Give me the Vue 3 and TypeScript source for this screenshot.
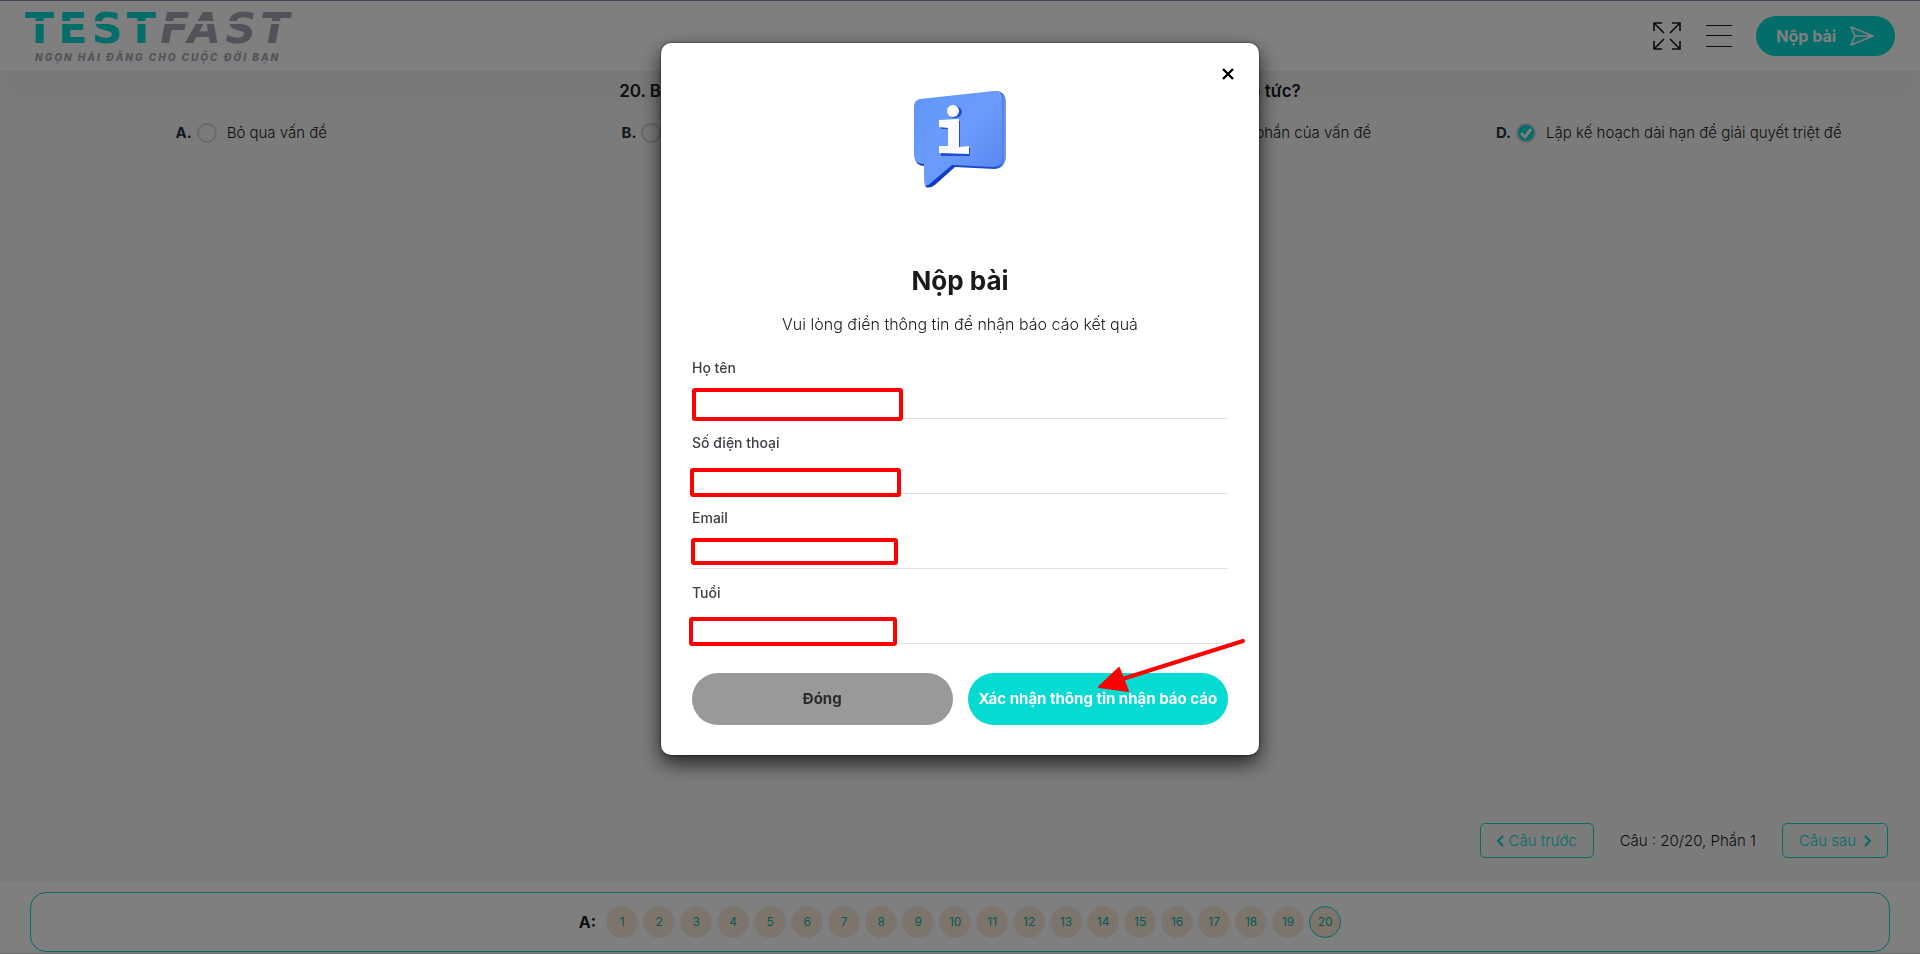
<script setup lang="ts">
import { ref } from 'vue'

interface Option {
  key: string
  text: string
}

interface Field {
  id: string
  label: string
  type: string
  mark: { left: number; top: number; width: number; height: number }
}

const options: Option[] = [
  { key: 'A', text: 'Bỏ qua vấn đề' },
  { key: 'B', text: 'Nhờ người khác hỗ trợ' },
  { key: 'C', text: 'Giải quyết tạm thời những phần của vấn đề' },
  { key: 'D', text: 'Lập kế hoạch dài hạn để giải quyết triệt để' },
]

const fields: Field[] = [
  { id: 'name', label: 'Họ tên', type: 'text', mark: { left: 0, top: 30, width: 211, height: 33 } },
  { id: 'phone', label: 'Số điện thoại', type: 'tel', mark: { left: -2, top: 35, width: 211, height: 29 } },
  { id: 'email', label: 'Email', type: 'email', mark: { left: -1, top: 30, width: 207, height: 27 } },
  { id: 'age', label: 'Tuổi', type: 'text', mark: { left: -3, top: 34, width: 208, height: 29 } },
]

const selected = ref('D')
const current = ref(20)
const total = 20
const values = ref<Record<string, string>>({ name: '', phone: '', email: '', age: '' })

function markStyle(mark: Field['mark']) {
  return {
    left: `${mark.left}px`,
    top: `${mark.top}px`,
    width: `${mark.width}px`,
    height: `${mark.height}px`,
  }
}
</script>

<template>
  <div class="page">
    <header class="header">
      <a class="logo" href="#">
        <span class="logo-name"><span class="logo-test">TEST</span><span class="logo-fast">FAST</span></span>
        <span class="logo-tagline">NGỌN HẢI ĐĂNG CHO CUỘC ĐỜI BẠN</span>
      </a>
      <div class="header-tools">
        <button class="icon-button" type="button" aria-label="Toàn màn hình">
          <svg width="30" height="30" viewBox="0 0 30 30" fill="none" stroke="#1a1a1a" stroke-width="1.6">
            <path d="M2 10V2h8M2 2l10 10M20 2h8v8M28 2L18 12M2 20v8h8M2 28l10-10M20 28h8v-8M28 28L18 18" />
          </svg>
        </button>
        <button class="icon-button" type="button" aria-label="Danh mục">
          <svg width="26" height="24" viewBox="0 0 26 24" fill="#1a1a1a">
            <path d="M0 1h26v1H0zM0 11h26v1H0zM0 22h26v1H0z" />
          </svg>
        </button>
        <button class="submit" type="button">
          Nộp bài
          <svg width="26" height="22" viewBox="0 0 26 22" fill="none" stroke="#fff" stroke-width="1.6" stroke-linejoin="round">
            <path d="M2 2l22 9L2 20l4-9zM6 11h18" />
          </svg>
        </button>
      </div>
    </header>

    <main class="content">
      <h1 class="question">20. Bạn sẽ làm gì khi gặp những vấn đề phức tạp không thể giải quyết ngay lập tức?</h1>
      <div class="options">
        <label v-for="option in options" :key="option.key" class="option">
          <strong>{{ option.key }}.</strong>
          <span class="radio" :class="{ checked: selected === option.key }">
            <input v-model="selected" type="radio" name="answer" :value="option.key" />
            <svg v-if="selected === option.key" width="14" height="14" viewBox="0 0 14 14" fill="none" stroke="#fff" stroke-width="3">
              <path d="M2 7l4 4 6-8" />
            </svg>
          </span>
          <span>{{ option.text }}</span>
        </label>
      </div>
      <nav class="pager">
        <button type="button" class="pager-button">
          <svg width="7" height="12" viewBox="0 0 7 12" fill="none" stroke="currentColor" stroke-width="2"><path d="M6 1L1 6l5 5" /></svg>
          Câu trước
        </button>
        <span>Câu : {{ current }}/{{ total }}, Phần 1</span>
        <button type="button" class="pager-button next">
          Câu sau
          <svg width="7" height="12" viewBox="0 0 7 12" fill="none" stroke="currentColor" stroke-width="2"><path d="M1 1l5 5-5 5" /></svg>
        </button>
      </nav>
    </main>

    <footer class="footer">
      <div class="numbers">
        <strong>A:</strong>
        <button v-for="n in total" :key="n" type="button" class="number" :class="{ active: n === current }">{{ n }}</button>
      </div>
    </footer>

    <div class="backdrop">
      <section class="modal" role="dialog" aria-modal="true" aria-labelledby="modal-title">
        <button class="close" type="button" aria-label="Đóng cửa sổ">
          <svg width="12" height="12" viewBox="0 0 12 12" fill="none" stroke="#000" stroke-width="2.4"><path d="M1 1l10 10M11 1L1 11" /></svg>
        </button>
        <svg class="info" width="140" height="130" viewBox="0 3 140 130">
          <defs>
            <linearGradient id="face" x1="0" y1="0" x2="1" y2="1">
              <stop offset="0" stop-color="#5f95fb" />
              <stop offset="0.5" stop-color="#6c9cfc" />
              <stop offset="1" stop-color="#5483ee" />
            </linearGradient>
            <linearGradient id="side" x1="0" y1="0" x2="1" y2="0">
              <stop offset="0" stop-color="#0b37bd" />
              <stop offset="0.9" stop-color="#1c4dd2" />
              <stop offset="1" stop-color="#7c9cf4" />
            </linearGradient>
          </defs>
          <path fill="url(#side)" d="M31 30l76-9q8 1 9 9v58q-1 10-11 11l-40-2-19 17q-6 5-10 3-2-2-1-21-9 0-10-8l1-51q1-6 5-7z" />
          <path fill="url(#face)" d="M30 29l74-8q8-1 8 8v59q0 9-9 9l-41-2-20 17q-5 5-7 3-1-1-1-21-10 0-10-9V37q0-7 6-8z" />
          <g fill="#1f4fd0">
            <ellipse cx="65" cy="42" rx="7" ry="6" />
            <path d="M51 51h19v27h10v8H51v-7h9V59h-9z" />
          </g>
          <g fill="#fbfbff">
            <ellipse cx="63" cy="41" rx="6" ry="6" />
            <path d="M49 50l20-1v28l10-1v8l-30-1v-7h9V58l-9-1z" />
          </g>
        </svg>
        <h2 id="modal-title" class="title">Nộp bài</h2>
        <p class="subtitle">Vui lòng điền thông tin để nhận báo cáo kết quả</p>
        <form class="form" @submit.prevent>
          <div v-for="field in fields" :key="field.id" class="field">
            <label :for="field.id">{{ field.label }}</label>
            <input :id="field.id" v-model="values[field.id]" :type="field.type" />
            <span class="mark" :style="markStyle(field.mark)"></span>
          </div>
          <div class="actions">
            <button type="button" class="action cancel">Đóng</button>
            <button type="submit" class="action confirm">
              Xác nhận thông tin nhận báo cáo
              <svg class="arrow" width="152" height="60" viewBox="0 0 152 60">
                <path d="M147 4L20 44" fill="none" stroke="#f00" stroke-width="4" stroke-linecap="round" />
                <path d="M3 50L23 31l9 23z" fill="#f00" stroke="#f00" stroke-width="2" stroke-linejoin="round" />
              </svg>
            </button>
          </div>
        </form>
      </section>
    </div>
  </div>
</template>

<style>
body {
  margin: 0;
}
</style>

<style scoped>
* {
  box-sizing: border-box;
}

.page {
  display: flex;
  flex-direction: column;
  min-height: 100vh;
  background: #f7f7f7;
  color: #1a1a1a;
  font-family: Inter, "Open Sans", sans-serif;
  font-size: 15px;
  font-weight: 300;
  line-height: 20px;
}

button {
  font: inherit;
  cursor: pointer;
}

.header {
  display: flex;
  align-items: center;
  justify-content: space-between;
  height: 71px;
  padding: 0 25px;
  border-top: 1px solid #9a84a6;
  background: #fff;
  box-shadow: 0 30px 30px rgba(0, 0, 0, 0.03);
}

.logo {
  display: flex;
  flex-direction: column;
  align-items: flex-start;
  text-decoration: none;
}

.logo-name {
  display: flex;
  font-family: "DejaVu Sans", sans-serif;
  font-size: 43px;
  font-weight: 700;
  line-height: 42px;
  letter-spacing: 4px;
}

.logo-test,
.logo-fast {
  background-clip: text;
  color: transparent;
}

.logo-test {
  background-image: linear-gradient(#05dad3 14px, transparent 14px, transparent 17px, #05dad3 17px);
}

.logo-fast {
  padding-right: 6px;
  background-image: linear-gradient(#a5a5b5 14px, transparent 14px, transparent 17px, #a5a5b5 17px);
  font-style: italic;
}

.logo-tagline {
  padding-left: 10px;
  color: #a5a5b5;
  font-size: 10px;
  font-weight: 800;
  font-style: italic;
  line-height: 16px;
  letter-spacing: 2px;
}

.header-tools {
  display: flex;
  align-items: center;
  gap: 24px;
}

.icon-button {
  display: flex;
  padding: 0;
  border: 0;
  background: none;
}

.submit {
  display: flex;
  align-items: center;
  gap: 13px;
  height: 40px;
  padding: 0 20px;
  border: 0;
  border-radius: 20px;
  background: #05dad3;
  color: #fff;
  font-size: 16px;
  font-weight: 700;
}

.content {
  display: flex;
  flex: 1;
  flex-direction: column;
  padding: 10px 15px 24px;
}

.question {
  margin: 0;
  font-size: 17px;
  font-weight: 600;
  line-height: 20px;
  text-align: center;
}

.options {
  display: grid;
  grid-template-columns: repeat(4, 1fr);
  margin-top: 22px;
}

.option {
  display: flex;
  align-items: center;
  justify-content: center;
}

.option strong {
  color: #26303f;
  font-weight: 700;
}

.radio {
  display: grid;
  place-items: center;
  width: 20px;
  height: 20px;
  margin: 0 10px 0 5px;
  border: 2px solid #d2d2d2;
  border-radius: 50%;
}

.radio > * {
  grid-area: 1 / 1;
}

.radio input {
  width: 16px;
  height: 16px;
  margin: 0;
  appearance: none;
}

.radio.checked {
  background: #05dad3;
}

.pager {
  display: flex;
  align-items: center;
  justify-content: flex-end;
  gap: 26px;
  margin-top: auto;
  padding-right: 17px;
  font-size: 15px;
}

.pager-button {
  display: flex;
  align-items: center;
  justify-content: center;
  gap: 5px;
  height: 35px;
  padding: 0 16px;
  border: 1px solid #05dad3;
  border-radius: 5px;
  background: none;
  color: #05dad3;
}

.pager-button.next {
  gap: 8px;
}

.footer {
  padding: 10px 30px 1px;
  border-bottom: 1px solid #ccc;
  background: #fff;
}

.numbers {
  display: flex;
  align-items: center;
  justify-content: center;
  gap: 5px;
  height: 60px;
  border: 1px solid #05dad3;
  border-radius: 16px;
}

.numbers strong {
  margin-right: 5px;
  font-size: 16px;
  font-weight: 700;
}

.number {
  width: 32px;
  height: 32px;
  padding: 0;
  border: 1px solid #eee;
  border-radius: 50%;
  background: #faebd9;
  color: #05b5af;
  font-size: 12px;
  font-weight: 400;
}

.number.active {
  border-color: #05dad3;
}

.backdrop {
  position: fixed;
  inset: 0;
  overflow: auto;
  padding: 43px 15px;
  background: rgba(0, 0, 0, 0.5);
}

.modal {
  position: relative;
  max-width: 598px;
  margin: 0 auto;
  padding: 30px 31px;
  border-radius: 10px;
  background: #fff;
  box-shadow: 0 0 1px 1px rgba(0, 0, 0, 0.3), 0 8px 20px rgba(0, 0, 0, 0.75);
}

.close {
  position: absolute;
  top: 20px;
  right: 20px;
  display: grid;
  place-items: center;
  width: 22px;
  height: 22px;
  padding: 0;
  border: 0;
  background: none;
}

.info {
  display: block;
  margin: 0 auto 63px;
}

.title {
  margin: 0 0 16px;
  font-size: 26px;
  font-weight: 700;
  line-height: 30px;
  text-align: center;
}

.subtitle {
  margin: 0 0 22px;
  font-size: 16px;
  line-height: 24px;
  text-align: center;
}

.form {
  display: grid;
  gap: 14px;
}

.field {
  position: relative;
  display: flex;
  flex-direction: column;
}

.field label {
  color: #3f4046;
  font-size: 14px;
  font-weight: 500;
  line-height: 20px;
}

.field input {
  height: 41px;
  padding: 0 4px;
  border: 0;
  border-bottom: 1px solid #e0e0e6;
  outline: 0;
  font: inherit;
}

.mark {
  position: absolute;
  border: 4px solid #f00;
  border-radius: 3px;
  pointer-events: none;
}

.actions {
  display: grid;
  grid-template-columns: 1fr 1fr;
  gap: 15px;
  margin-top: 15px;
}

.action {
  position: relative;
  height: 52px;
  padding: 0;
  border: 0;
  border-radius: 26px;
  font-size: 15px;
  font-weight: 700;
  white-space: nowrap;
}

.cancel {
  background: #999;
  color: #2b2b2b;
}

.confirm {
  background: #05dad3;
  color: #fff;
}

.arrow {
  position: absolute;
  top: -36px;
  left: 128px;
  pointer-events: none;
}
</style>
